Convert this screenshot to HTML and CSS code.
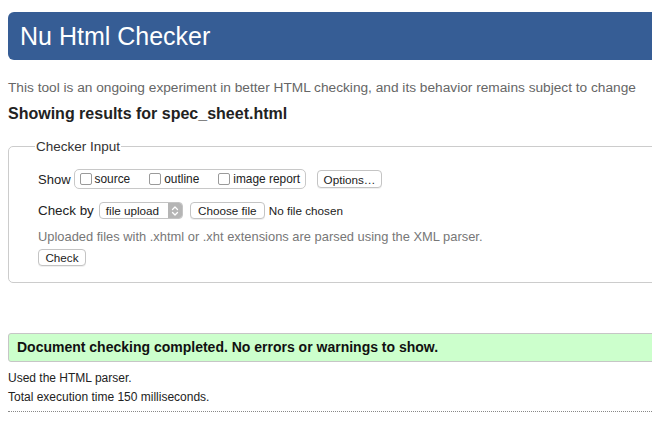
FILE: index.html
```html
<!DOCTYPE html>
<html lang="en">
<head>
<meta charset="utf-8">
<title>Nu Html Checker</title>
<link rel="stylesheet" href="styles.css">
</head>
<body>
<div class="page">
  <h1 class="banner">Nu Html Checker</h1>
  <p class="intro">This tool is an ongoing experiment in better HTML checking, and its behavior remains subject to change</p>
  <h2 class="results-title">Showing results for spec_sheet.html</h2>

  <fieldset class="checker">
    <legend class="checker-legend">Checker Input</legend>
    <div class="row row-show">
      <span class="label label-show">Show</span>
      <div class="show-group">
        <label class="opt"><span class="box"></span>source</label>
        <label class="opt"><span class="box"></span>outline</label>
        <label class="opt"><span class="box"></span>image report</label>
      </div>
      <span class="btn btn-options">Options…</span>
    </div>
    <div class="row row-check">
      <span class="label label-check">Check by</span>
      <span class="select">file upload<span class="stepper"><svg viewBox="0 0 14 16" width="14" height="16"><path d="M4.5 6.5 L7 4 L9.5 6.5 M4.5 9.5 L7 12 L9.5 9.5" fill="none" stroke="#fff" stroke-width="1.3" stroke-linecap="round" stroke-linejoin="round"/></svg></span></span>
      <span class="btn btn-file">Choose file</span>
      <span class="nofile">No file chosen</span>
    </div>
    <p class="hint">Uploaded files with .xhtml or .xht extensions are parsed using the XML parser.</p>
    <span class="btn btn-check">Check</span>
  </fieldset>

  <div class="success">Document checking completed. No errors or warnings to show.</div>
  <p class="meta">Used the HTML parser.</p>
  <p class="meta">Total execution time 150 milliseconds.</p>
  <hr class="dotted">
</div>
</body>
</html>
```
FILE: styles.css
```css
html, body {
  margin: 0;
  padding: 0;
  background: #fff;
  overflow: hidden;
}
body {
  font-family: "Liberation Sans", Arial, sans-serif;
  color: #222;
}
.page {
  width: 720px;
  padding: 12px 0 0 8px;
}
.banner {
  margin: 0;
  height: 48px;
  line-height: 48px;
  background: #365d95;
  color: #fff;
  font-weight: normal;
  font-size: 25px;
  padding-left: 12px;
  border-radius: 6px 0 0 6px;
}
.intro {
  margin: 19px 0 0;
  font-size: 13.7px;
  line-height: 18px;
  color: #666;
  white-space: nowrap;
}
.results-title {
  margin: 7px 0 0;
  font-size: 16px;
  line-height: 20px;
  font-weight: bold;
  color: #222;
}
.checker {
  margin: 15px 0 0;
  border: 1px solid #cccccc;
  border-radius: 5px;
  padding: 15px 0 16px 29px;
  min-width: 0;
}
.checker-legend {
  font-size: 13.5px;
  line-height: 15px;
  color: #333;
  padding: 0 1px;
  margin-left: -3px;
}
.row {
  display: flex;
  align-items: center;
  font-size: 13px;
  color: #222;
}
.row-show {
  height: 20px;
}
.row-check {
  margin-top: 13px;
  height: 17px;
}
.label {
  margin-right: 5px;
}
.label-show {
  margin-right: 3px;
}
.label-check {
  font-size: 13.4px;
  margin-right: 5px;
}
.show-group {
  display: flex;
  align-items: center;
  height: 18px;
  border: 1px solid #c8c8c8;
  border-radius: 5px;
  padding: 0 5px 0 5px;
  font-size: 11.9px;
  margin-right: 11px;
}
.opt {
  display: flex;
  align-items: center;
  margin-right: 19px;
}
.opt:last-child {
  margin-right: 0;
}
.box {
  width: 10px;
  height: 10px;
  border: 1px solid #9a9a9a;
  border-radius: 2px;
  margin-right: 3px;
  background: #fff;
}
.btn {
  display: inline-flex;
  align-items: center;
  justify-content: center;
  box-sizing: border-box;
  border: 1px solid #c4c4c4;
  border-radius: 4px;
  background: #fff;
  font-size: 11.7px;
  color: #222;
  box-shadow: 0 1px 0 rgba(0,0,0,0.06);
}
.btn-options {
  width: 65px;
  height: 18px;
}
.select {
  display: inline-flex;
  align-items: center;
  box-sizing: border-box;
  width: 84px;
  height: 17px;
  border: 1px solid #c4c4c4;
  border-radius: 4px;
  padding-left: 6px;
  font-size: 11.7px;
  justify-content: space-between;
  margin-right: 7px;
}
.stepper {
  display: flex;
  align-items: center;
  justify-content: center;
  width: 14px;
  height: 15px;
  background: #b5b5b5;
  border-radius: 0 3px 3px 0;
}
.stepper svg {
  display: block;
}
.btn-file {
  width: 75px;
  height: 17px;
  margin-right: 4px;
}
.nofile {
  font-size: 11.7px;
}
.hint {
  margin: 10px 0 0;
  font-size: 12.9px;
  line-height: 16px;
  color: #777;
}
.btn-check {
  margin-top: 4px;
  width: 48px;
  height: 17px;
}
.success {
  margin-top: 50px;
  height: 29px;
  box-sizing: border-box;
  line-height: 27px;
  border: 1px solid #c6c6c6;
  border-radius: 3px 0 0 3px;
  background: #ccffcc;
  padding-left: 8px;
  font-size: 14px;
  font-weight: bold;
  color: #111;
}
.meta {
  margin: 9px 0 0;
  font-size: 12px;
  line-height: 14px;
  color: #222;
}
.meta + .meta {
  margin-top: 5px;
}
.dotted {
  margin: 7px 0 0;
  border: 0;
  border-top: 1px dotted #888;
  height: 0;
}
```
